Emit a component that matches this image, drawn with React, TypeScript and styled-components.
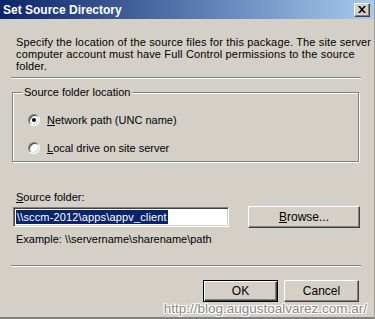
import { createGlobalStyle, styled } from "styled-components";

const GlobalStyle = createGlobalStyle`
  html, body {
    margin: 0;
    padding: 0;
    background: #d4d0c8;
  }
  body {
    font-family: "Liberation Sans", Arial, sans-serif;
    font-size: 11px;
    color: #000;
  }
`;

export default function App() {
  return (
    <>
      <GlobalStyle />
      <Window>
        <TitleBar>
          <Title>Set Source Directory</Title>
          <CloseButton aria-label="close">
            <svg width="8" height="7" viewBox="0 0 8 7">
              <path d="M0 0h2l2 2.2L6 0h2L5 3.5 8 7H6L4 4.8 2 7H0l3-3.5z" fill="#000" />
            </svg>
          </CloseButton>
        </TitleBar>
        <Body>
          <Description>
            Specify the location of the source files for this package. The site server
            <br />
            computer account must have Full Control permissions to the source
            <br />
            folder.
          </Description>
          <Separator />
          <GroupBox>
            <GroupLabel>Source folder location</GroupLabel>
            <RadioRow>
              <Radio $checked />
              <span>
                <u>N</u>etwork path (UNC name)
              </span>
            </RadioRow>
            <RadioRow>
              <Radio />
              <span>
                <u>L</u>ocal drive on site server
              </span>
            </RadioRow>
          </GroupBox>
          <FieldLabel>
            <u>S</u>ource folder:
          </FieldLabel>
          <FieldRow>
            <TextBox>
              <Selected>\\sccm-2012\apps\appv_client</Selected>
            </TextBox>
            <Button $width={112}>
              <u>B</u>rowse...
            </Button>
          </FieldRow>
          <Hint>Example: \\servername\sharename\path</Hint>
          <Separator $top={19} />
          <ButtonRow>
            <Button $default>OK</Button>
            <Button>Cancel</Button>
          </ButtonRow>
        </Body>
        <Watermark>http://blog.augustoalvarez.com.ar/</Watermark>
      </Window>
    </>
  );
}

const Window = styled.div`
  position: relative;
  width: 375px;
  height: 319px;
  box-sizing: border-box;
  background: #d4d0c8;
  border-right: 1px solid #a09c94;
  border-bottom: 2px solid #808080;
  display: flex;
  flex-direction: column;
  overflow: hidden;
`;

const TitleBar = styled.div`
  height: 19px;
  padding: 0 4px 0 3px;
  display: flex;
  align-items: center;
  justify-content: space-between;
  background: linear-gradient(to right, #0a246a, #a6caf0);
`;

const Title = styled.span`
  color: #fff;
  font-weight: bold;
  font-size: 12px;
`;

const CloseButton = styled.div`
  width: 16px;
  height: 14px;
  box-sizing: border-box;
  background: #d4d0c8;
  border-top: 1px solid #fff;
  border-left: 1px solid #fff;
  border-right: 1px solid #404040;
  border-bottom: 1px solid #404040;
  box-shadow: inset -1px -1px #808080;
  display: flex;
  align-items: center;
  justify-content: center;
`;

const Body = styled.div`
  padding: 0 13px 0 11px;
  display: flex;
  flex-direction: column;
`;

const Description = styled.div`
  margin-top: 17px;
  padding-left: 5px;
  line-height: 12px;
  letter-spacing: 0.15px;
  white-space: nowrap;
`;

const Separator = styled.div<{ $top?: number }>`
  margin-top: ${(p) => p.$top ?? 5}px;
  height: 0;
  border-top: 1px solid #808080;
  border-bottom: 1px solid #fff;
`;

const GroupBox = styled.div`
  position: relative;
  margin: 13px 2px 0 1px;
  padding: 21px 0 7px 15px;
  border: 1px solid #808080;
  box-shadow: inset 1px 1px #fff, 1px 1px #fff;
  display: flex;
  flex-direction: column;
  gap: 16px;
`;

const GroupLabel = styled.span`
  position: absolute;
  top: -7px;
  left: 9px;
  padding: 0 2px;
  line-height: 13px;
  background: #d4d0c8;
`;

const RadioRow = styled.label`
  display: flex;
  align-items: center;
  gap: 7px;
  height: 12px;
`;

const Radio = styled.span<{ $checked?: boolean }>`
  position: relative;
  width: 12px;
  height: 12px;
  box-sizing: border-box;
  border-radius: 50%;
  background: #fff;
  border: 1px solid;
  border-color: #808080 #fff #fff #808080;
  box-shadow: inset 1px 1px #404040, inset -1px -1px #d4d0c8;
  &::after {
    content: "";
    display: ${(p) => (p.$checked ? "block" : "none")};
    position: absolute;
    left: 3px;
    top: 3px;
    width: 4px;
    height: 4px;
    border-radius: 50%;
    background: #000;
  }
`;

const FieldLabel = styled.div`
  margin-top: 29px;
  padding-left: 5px;
  line-height: 13px;
`;

const FieldRow = styled.div`
  margin-top: 2px;
  display: flex;
  align-items: center;
  justify-content: space-between;
  padding: 0 1px 0 2px;
`;

const TextBox = styled.div`
  width: 216px;
  height: 20px;
  box-sizing: border-box;
  background: #fff;
  border: 1px solid;
  border-color: #808080 #fff #fff #808080;
  box-shadow: inset 1px 1px #404040, inset -1px -1px #d4d0c8;
  display: flex;
  align-items: center;
  padding-left: 2px;
`;

const Selected = styled.span`
  background: #0a246a;
  color: #fff;
  line-height: 14px;
  padding: 0 1px;
  letter-spacing: 0.15px;
`;

const Button = styled.div<{ $width?: number; $default?: boolean }>`
  width: ${(p) => p.$width ?? 75}px;
  height: 22px;
  box-sizing: border-box;
  background: #d4d0c8;
  display: flex;
  align-items: center;
  justify-content: center;
  font-size: 12px;
  border: 1px solid;
  border-color: ${(p) => (p.$default ? "#000" : "#fff #404040 #404040 #fff")};
  box-shadow: ${(p) =>
    p.$default
      ? "inset 1px 1px #fff, inset -1px -1px #404040, inset -2px -2px #808080"
      : "inset -1px -1px #808080"};
`;

const Hint = styled.div`
  margin-top: 5px;
  padding-left: 5px;
  line-height: 13px;
`;

const ButtonRow = styled.div`
  margin-top: 13px;
  padding-right: 2px;
  display: flex;
  justify-content: flex-end;
  gap: 6px;
`;

const Watermark = styled.div`
  position: absolute;
  right: 7px;
  bottom: 0px;
  font-size: 13.5px;
  line-height: 16px;
  color: #8a8a8a;
  text-shadow: 1px 1px 0 #fff, -1px -1px 0 #fff, 1px -1px 0 #fff, -1px 1px 0 #fff;
`;
